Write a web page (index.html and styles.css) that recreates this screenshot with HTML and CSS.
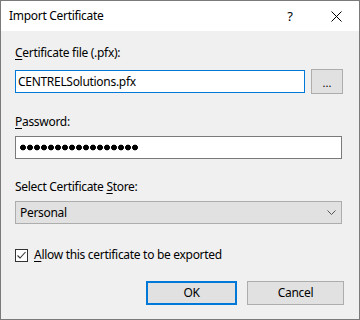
FILE: index.html
```html
<!DOCTYPE html>
<html lang="en">
  <head>
    <meta charset="UTF-8" />
    <title>Import Certificate</title>
    <link rel="stylesheet" href="styles.css">
  </head>
  <body>
    <div class="dialog">
      <!-- Title bar -->
      <div class="titlebar">
        <span class="title">Import Certificate</span>
        <span class="help">?</span>
        <span class="close">
          <svg width="11" height="11" viewBox="0 0 11 11">
            <path d="M0.5 0.5 L10.5 10.5 M10.5 0.5 L0.5 10.5" stroke="#000" stroke-width="1" />
          </svg>
        </span>
      </div>

      <div class="content">
        <label class="label"><u>C</u>ertificate file (.pfx):</label>
        <div class="file-row">
          <div class="textbox focused">CENTRELSolutions.pfx</div>
          <button class="browse-btn">...</button>
        </div>

        <label class="label gap"><u>P</u>assword:</label>
        <div class="textbox wide">
          <div class="dots"></div>
        </div>

        <label class="label gap">Select Certificate <u>S</u>tore:</label>
        <div class="combo">
          <span>Personal</span>
          <svg width="9" height="5" viewBox="0 0 9 5">
            <path d="M0.5 0.5 L4.5 4.5 L8.5 0.5" fill="none" stroke="#555" stroke-width="1" />
          </svg>
        </div>

        <div class="check-row">
          <span class="checkbox">
            <svg width="11" height="11" viewBox="0 0 11 11">
              <path d="M1.5 5.5 L4 8 L9.5 2" fill="none" stroke="#333" stroke-width="1.1" />
            </svg>
          </span>
          <span><u>A</u>llow this certificate to be exported</span>
        </div>

        <div class="buttons">
          <button class="btn default">OK</button>
          <button class="btn cancel">Cancel</button>
        </div>
      </div>
    </div>
  </body>
</html>
```

FILE: styles.css
```css
* {
  margin: 0;
  padding: 0;
  box-sizing: border-box;
}

body {
  font-family: "Noto Sans", "Liberation Sans", sans-serif;
  font-size: 12px;
  letter-spacing: -0.3px;
  color: #000;
  background: #f0f0f0;
}

.dialog {
  width: 360px;
  height: 320px;
  border: 1px solid #7a7a7a;
  background: #f0f0f0;
  display: flex;
  flex-direction: column;
}

.titlebar {
  height: 30px;
  background: #fff;
  display: flex;
  align-items: center;
  padding-left: 8px;
  flex-shrink: 0;
}

.title {
  flex: 1;
  line-height: 16px;
}

.help {
  width: 20px;
  text-align: center;
  font-size: 13px;
  margin-right: 31px;
}

.close {
  display: flex;
  margin-right: 17px;
}

.content {
  padding: 14px 15px 0 14px;
  display: flex;
  flex-direction: column;
}

.label {
  line-height: 16px;
  margin-bottom: 8px;
}

.label.gap {
  margin-top: 20px;
  margin-bottom: 6px;
}

.label u,
.check-row u {
  text-underline-offset: 2px;
}

.file-row {
  display: flex;
  align-items: center;
  gap: 6px;
  height: 25px;
}

.textbox {
  height: 23px;
  background: #fff;
  border: 1px solid #7a7a7a;
  padding: 0 2px;
  display: flex;
  align-items: center;
  line-height: 16px;
}

.textbox.focused {
  width: 290px;
  border-color: #0078d7;
}

.textbox.wide {
  width: 327px;
  padding-left: 4px;
}

.dots {
  width: 119px;
  height: 7px;
  background: radial-gradient(circle at 3px 3.5px, #000 2.6px, transparent 3.2px) repeat-x;
  background-size: 7px 7px;
}

.browse-btn {
  width: 32px;
  height: 25px;
  background: #e1e1e1;
  border: 1px solid #adadad;
  font-family: inherit;
  font-size: 11px;
  line-height: 16px;
  padding-top: 3px;
}

.combo {
  width: 327px;
  height: 23px;
  background: #e1e1e1;
  border: 1px solid #adadad;
  display: flex;
  align-items: center;
  justify-content: space-between;
  padding: 0 5px 0 4px;
  line-height: 16px;
}

.check-row {
  display: flex;
  align-items: center;
  gap: 6px;
  margin-top: 23px;
  line-height: 16px;
}

.checkbox {
  width: 13px;
  height: 13px;
  border: 1px solid #333;
  background: #fff;
  display: flex;
}

.buttons {
  display: flex;
  gap: 10px;
  margin-top: 18px;
  padding-left: 131px;
}

.btn {
  height: 24px;
  background: #e1e1e1;
  border: 1px solid #adadad;
  font-family: inherit;
  font-size: 12px;
  letter-spacing: inherit;
  line-height: 16px;
  color: #000;
}

.btn.default {
  width: 91px;
  border: 2px solid #0078d7;
}

.btn.cancel {
  width: 97px;
}
```
